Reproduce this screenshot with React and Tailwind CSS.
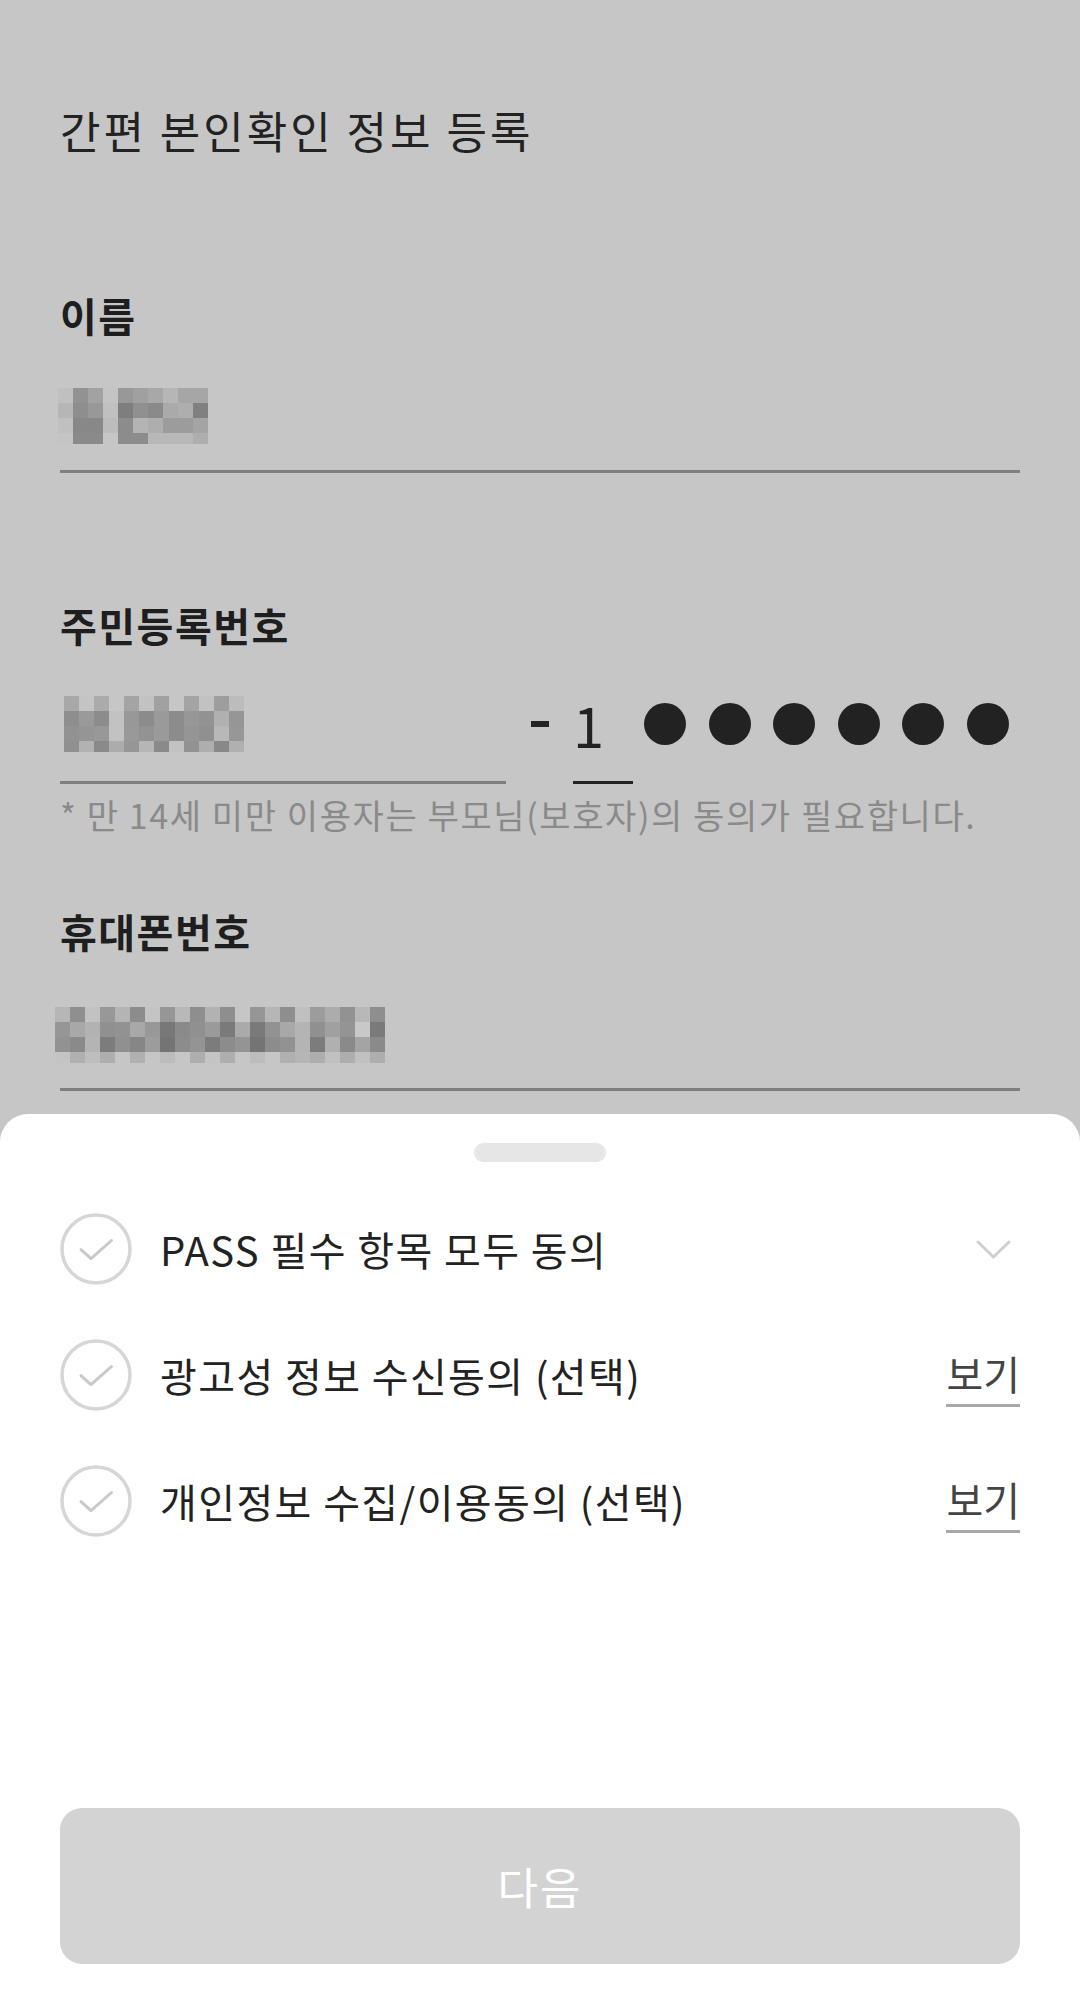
import React from 'react'

const NAME_CELLS = [
  ['c0', '92', 'a2', 'c4', '98', 'a0', 'a8', 'b6', 'a6', 'a6'],
  ['b6', '8e', '98', 'c0', '7e', '90', '8a', 'aa', 'ae', '80'],
  ['c0', '88', '88', 'bc', '8c', 'b4', 'ae', '9c', '9c', 'a4'],
  ['c4', '8a', '8a', 'c6', '8c', '8c', 'b8', 'b8', 'b8', 'ae'],
]

const RRN_CELLS = [
  ['a8', 'c4', 'ab', 'c6', 'a4', 'c2', 'a1', 'c6', 'a4', 'c2', '9e', 'bc'],
  ['8e', '9a', '8c', 'c2', '98', '8b', '9a', '8c', '97', '92', 'b0', '96'],
  ['92', '95', '98', 'c2', '99', '93', '9a', '8c', '95', '90', 'b8', '97'],
  ['90', 'b2', '8a', 'ac', '96', 'b6', '8a', 'c2', '92', 'ae', '88', 'b0'],
]

const PHONE_CELLS = [
  ['b6', '8f', 'c2', '98', 'b4', '8c', 'c4', '96', 'b8', '8e', 'b2', '8e', 'c6', '96', 'b6', '8e', 'c0', '9c', 'ac', '92', 'b8', '8e'],
  ['96', 'a8', 'b2', '90', '92', 'a8', '98', '78', '8a', '90', '9a', '7a', 'aa', '7a', '92', 'a8', 'b4', '90', 'a0', '94', 'c8', '7a'],
  ['92', '8a', 'b4', '7c', '90', '86', '9c', '74', '8c', '94', '7c', '8c', '94', '74', '8c', '92', 'b4', '7c', 'b0', '8a', 'a4', '8a'],
  ['c4', 'b0', 'be', 'ae', 'c6', 'b0', 'c6', 'bc', 'c6', 'ae', 'c4', 'ae', 'c6', 'bc', 'c6', 'b0', 'b6', 'ae', 'c0', 'ae', 'c0', 'ae'],
]

// pixelated (masked) value
function Mosaic({ cells, className }) {
  const cols = cells[0].length
  const heights = [15, 15, 15, 11]
  const w = cols * 15
  const h = heights.reduce((a, b) => a + b, 0)
  let y = 0
  return (
    <svg width={w} height={h} viewBox={`0 0 ${w} ${h}`} className={className}>
      {cells.map((row, r) => {
        const top = y
        y += heights[r]
        return row.map((v, c) => (
          <rect key={`${r}-${c}`} x={c * 15} y={top} width="15" height={heights[r]} fill={`#${v}${v}${v}`} />
        ))
      })}
    </svg>
  )
}

function CheckCircle() {
  return (
    <svg width="72" height="72" viewBox="0 0 72 72" className="shrink-0">
      <circle cx="36" cy="36" r="34" fill="none" stroke="#d6d6d6" strokeWidth="3.5" />
      <path d="M21 36.7 L31 45.7 L51.5 27.5" fill="none" stroke="#c9c9c9" strokeWidth="3" strokeLinecap="round" strokeLinejoin="round" />
    </svg>
  )
}

function AgreeRow({ label, chevron }) {
  return (
    <div className="flex items-center h-[72px]">
      <CheckCircle />
      <span className="ml-[28px] text-[40px] leading-[40px] text-[#222] tracking-[1.4px]">{label}</span>
      <div className="ml-auto">
        {chevron ? (
          <svg width="36" height="20" viewBox="0 0 36 20" className="mr-[8px]">
            <path d="M2 3 L17.5 18 L33 3" fill="none" stroke="#cfcfcf" strokeWidth="3" strokeLinecap="round" strokeLinejoin="round" />
          </svg>
        ) : (
          <span className="block pt-[10px] pb-[11px] text-[40px] leading-[40px] text-[#444] border-b-[3px] border-[#a8a8a8]">보기</span>
        )}
      </div>
    </div>
  )
}

export default function App() {
  return (
    <div className="w-[1080px] h-[2006px] bg-[#c6c6c6] flex flex-col overflow-hidden font-['Noto_Sans_CJK_KR','Noto_Sans',sans-serif]">
      {/* ─── dimmed form behind the sheet ─── */}
      <div className="h-[1114px] shrink-0 px-[60px] pt-[108px] flex flex-col">
        <h1 className="text-[44px] leading-[44px] text-[#222] font-normal tracking-[3px]">간편 본인확인 정보 등록</h1>

        <div className="mt-[143px] text-[40px] leading-[40px] font-bold text-[#1e1e1e] tracking-[1.5px]">이름</div>
        <Mosaic cells={NAME_CELLS} className="mt-[53px] -ml-[2px]" />
        <div className="mt-[26px] h-[3px] bg-[#7f7f7f]" />

        <div className="mt-[132px] text-[40px] leading-[40px] font-bold text-[#1e1e1e] tracking-[1.5px]">주민등록번호</div>
        <div className="mt-[51px] h-[88px] flex items-start">
          <div className="w-[446px] h-full flex flex-col">
            <Mosaic cells={RRN_CELLS} className="ml-[4px]" />
            <div className="mt-auto h-[3px] bg-[#7f7f7f]" />
          </div>
          <div className="ml-[25px] mt-[25px] w-[18px] h-[6px] bg-[#222]" />
          <div className="ml-[24px] w-[60px] h-full flex flex-col items-start">
            <span className="text-[56px] leading-[56px] text-[#222] font-normal">1</span>
            <div className="mt-auto w-full h-[3px] bg-[#222]" />
          </div>
          <div className="ml-[11px] mt-[7px] flex gap-[22.5px]">
            {[0, 1, 2, 3, 4, 5].map((i) => (
              <div key={i} className="w-[42px] h-[42px] rounded-full bg-[#222]" />
            ))}
          </div>
        </div>
        <p className="mt-[14px] text-[34px] leading-[34px] text-[#8a8a8a] tracking-[1.6px] whitespace-nowrap">
          * 만 14세 미만 이용자는 부모님(보호자)의 동의가 필요합니다.
        </p>

        <div className="mt-[79px] text-[40px] leading-[40px] font-bold text-[#1e1e1e] tracking-[1.5px]">휴대폰번호</div>
        <Mosaic cells={PHONE_CELLS} className="mt-[56px] -ml-[5px]" />
        <div className="mt-[25px] h-[3px] bg-[#7f7f7f]" />
      </div>

      {/* ─── bottom sheet ─── */}
      <div className="flex-1 bg-white rounded-t-[28px] flex flex-col px-[60px]">
        <div className="mt-[29px] self-center w-[132px] h-[19px] rounded-full bg-[#e6e6e6]" />

        <div className="mt-[51px] flex flex-col gap-[54px]">
          <AgreeRow label="PASS 필수 항목 모두 동의" chevron />
          <AgreeRow label="광고성 정보 수신동의 (선택)" />
          <AgreeRow label="개인정보 수집/이용동의 (선택)" />
        </div>

        <button
          type="button"
          disabled
          className="mt-auto mb-[42px] h-[156px] w-full rounded-[22px] bg-[#d3d3d3] text-white text-[44px] leading-[44px] tracking-[2px]"
        >
          다음
        </button>
      </div>
    </div>
  )
}
